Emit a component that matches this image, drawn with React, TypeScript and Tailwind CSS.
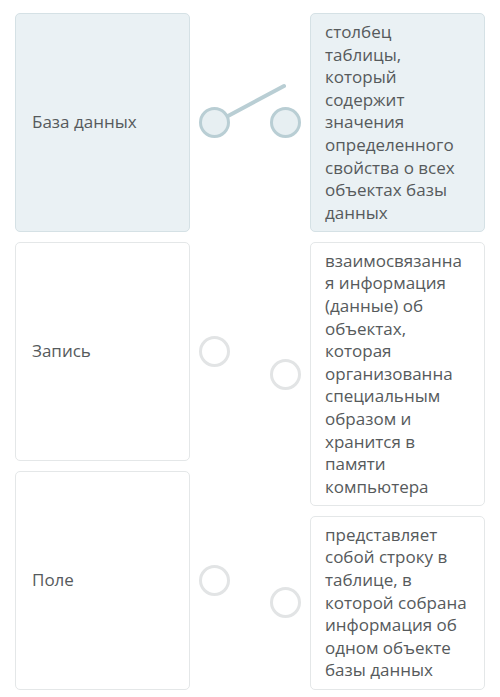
const terms = [
  { label: 'База данных', linked: true },
  { label: 'Запись', linked: false },
  { label: 'Поле', linked: false },
];

const definitions = [
  {
    text: 'столбец таблицы, который содержит значения определенного свойства о всех объектах базы данных',
    linked: true,
  },
  {
    text: 'взаимосвязанная информация (данные) об объектах, которая организованна специальным образом и хранится в памяти компьютера',
    linked: false,
  },
  {
    text: 'представляет собой строку в таблице, в которой собрана информация об одном объекте базы данных',
    linked: false,
  },
];

function Dot({ linked }: { linked: boolean }) {
  return (
    <span
      className={`block w-[31px] h-[31px] shrink-0 rounded-full border-[3px] ${
        linked ? 'bg-[#e7eff2] border-[#b9ced4]' : 'bg-white border-[#e2e4e5]'
      }`}
    />
  );
}

export default function App() {
  return (
    <div
      className="relative w-[500px] h-[697px] bg-white text-[#565a5c] text-[17px] leading-[22.6px]"
      style={{ fontFamily: '"Open Sans", "Noto Sans", sans-serif' }}
    >
      <div className="flex justify-between px-[15px] pt-[13px]">
        {/* terms */}
        <div className="flex flex-col gap-[9.5px]">
          {terms.map((t) => (
            <div key={t.label} className="flex flex-1 items-center gap-[9px]">
              <div
                className={`w-[175px] h-full flex items-center px-4 rounded-[5px] border ${
                  t.linked ? 'bg-[#eaf1f4] border-[#d5e1e5]' : 'bg-white border-[#e4e7e8]'
                }`}
              >
                {t.label}
              </div>
              <Dot linked={t.linked} />
            </div>
          ))}
        </div>

        {/* definitions */}
        <div className="flex flex-col gap-[9.5px]">
          {definitions.map((d, i) => (
            <div key={i} className="flex items-center gap-[9px]">
              <Dot linked={d.linked} />
              <div
                className={`w-[175px] pl-[14px] pr-[16px] py-[7px] rounded-[5px] border break-words ${
                  d.linked ? 'bg-[#eaf1f4] border-[#d5e1e5]' : 'bg-white border-[#e4e7e8]'
                }`}
              >
                {d.text}
              </div>
            </div>
          ))}
        </div>
      </div>

      {/* connector being dragged from the first term */}
      <svg className="absolute left-0 top-0 pointer-events-none" width="500" height="697">
        <line x1="228" y1="116" x2="284" y2="86" stroke="#b9ced4" strokeWidth="4" strokeLinecap="round" />
      </svg>
    </div>
  );
}
